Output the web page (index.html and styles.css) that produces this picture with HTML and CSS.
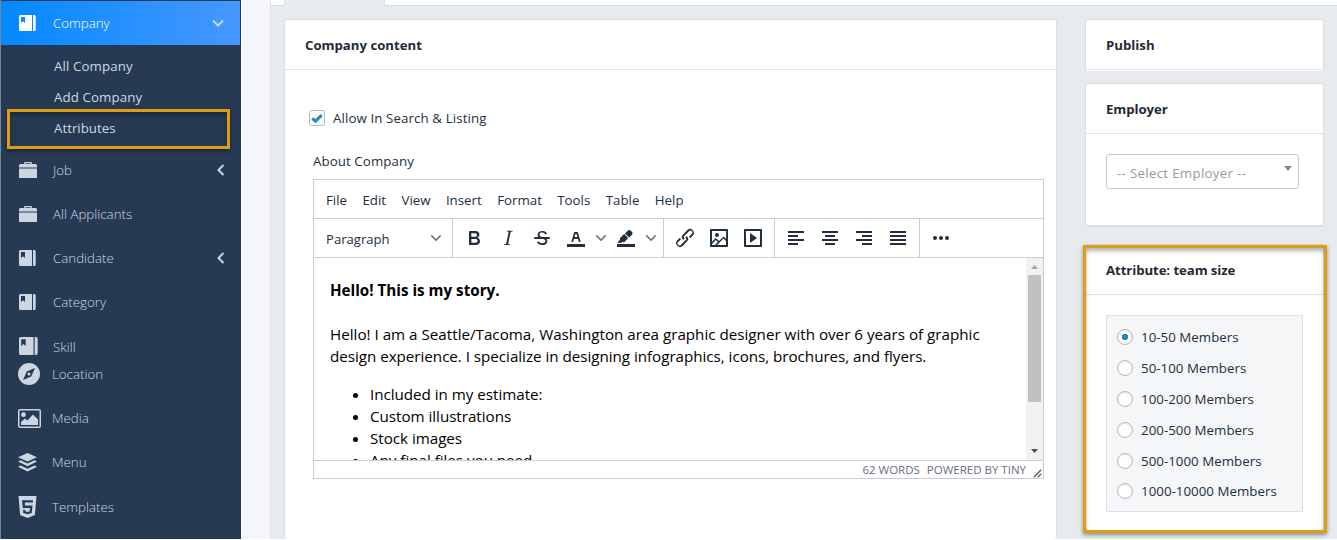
FILE: index.html
```html
<!DOCTYPE html>
<html lang="en">
<head>
<meta charset="utf-8">
<title>Company</title>
<link rel="stylesheet" href="styles.css">
</head>
<body>
<svg class="defs" width="0" height="0">
  <symbol id="book" viewBox="0 0 17 16"><path fill-rule="evenodd" d="M1.500 0H13v16H1.500a1.500 1.500 0 0 1-1.500-1.500v-13A1.500 1.500 0 0 1 1.500 0zM2 2v6l2-1.800L6 8V2zM14 0h1.200a1.500 1.500 0 0 1 1.500 1.500v13a1.500 1.500 0 0 1-1.500 1.500H14z"/></symbol>
  <symbol id="case" viewBox="0 0 18 16"><path fill-rule="evenodd" d="M0 5.500V3.500a1.500 1.500 0 0 1 1.500-1.500H5V1.200A1.200 1.200 0 0 1 6.200 0h5.600A1.200 1.200 0 0 1 13 1.200V2h3.500A1.500 1.500 0 0 1 18 3.500v2zM6.300 2h5.400v-.8H6.300zM0 6.500h18V16H0z"/></symbol>
  <symbol id="chev" viewBox="0 0 10 10"><path d="M8.700 2.200c.3-.3.8-.3 1 0 .4.4.4.9 0 1.200L5.700 7.800c-.3.3-.9.3-1.200 0L.2 3.400a.8.8 0 0 1 0-1.200c.3-.3.8-.3 1.100 0L5 6l3.700-3.800z"/></symbol>
</svg>
<div class="app">
  <nav class="sidebar">
    <div class="item active"><svg class="ico book"><use href="#book"/></svg><span>Company</span><svg class="arrow down" viewBox="0 0 12 8"><path d="M1 1.500l5 5 5-5"/></svg></div>
    <div class="submenu">
      <div class="sub s-all">All Company</div>
      <div class="sub s-add">Add Company</div>
      <div class="sub s-att">Attributes</div>
      <div class="mark"></div>
    </div>
    <div class="item"><svg class="ico case"><use href="#case"/></svg><span>Job</span><svg class="arrow left" viewBox="0 0 8 12"><path d="M6.500 1l-5 5 5 5"/></svg></div>
    <div class="item"><svg class="ico case"><use href="#case"/></svg><span>All Applicants</span></div>
    <div class="item"><svg class="ico book"><use href="#book"/></svg><span>Candidate</span><svg class="arrow left" viewBox="0 0 8 12"><path d="M6.500 1l-5 5 5 5"/></svg></div>
    <div class="item"><svg class="ico book"><use href="#book"/></svg><span>Category</span></div>
    <div class="item skill"><svg class="ico book big"><use href="#book"/></svg><span>Skill</span></div>
    <div class="item low"><svg class="ico compass" viewBox="0 0 22 22"><path fill-rule="evenodd" d="M11 0a11 11 0 1 1 0 22 11 11 0 0 1 0-22zM17 5L8.800 8.600 5 17l8.200-3.600zM11 9.500a1.500 1.500 0 1 1 0 3 1.500 1.500 0 0 1 0-3z"/></svg><span>Location</span></div>
    <div class="item low"><svg class="ico photo" viewBox="0 0 23 19"><path fill-rule="evenodd" d="M2 0h19a2 2 0 0 1 2 2v15a2 2 0 0 1-2 2H2a2 2 0 0 1-2-2V2a2 2 0 0 1 2-2zM1.500 1.500v16h20v-16zM5.500 3.300a2.400 2.400 0 1 1 0 4.800 2.400 2.400 0 0 1 0-4.800zM3 16v-3l4-3.500 2.500 2L15 5.500l5 5V16z"/></svg><span>Media</span></div>
    <div class="item low"><svg class="ico layers" viewBox="0 0 19 19"><path d="M9.500 0L19 4.300 9.500 8.600 0 4.300z"/><path d="M0 8.500l2.500-1.200 7 3.200 7-3.200L19 8.500l-9.500 4.700z"/><path d="M0 13.800l2.500-1.200 7 3.200 7-3.200 2.500 1.200L9.500 18.500z"/></svg><span>Menu</span></div>
    <div class="item low last"><svg class="ico html5" viewBox="0 0 18 22"><path fill-rule="evenodd" d="M0 0h18l-1.600 19L9 22l-7.400-3zM3.500 4.200l.8 7.800h7.200l-.3 3.200-2.200.7-2.200-.7-.1-1.500H4.500l.3 3.400L9 18.300l4.200-1.200.8-7.500H6.500l-.2-3h8l.2-2.400z"/></svg><span>Templates</span></div>
  </nav>
  <div class="gutter"></div>
  <div class="page">
    <div class="tabs"><i class="tab-start"></i><i class="tab-open"></i><i class="tab-rest"></i></div>
    <div class="columns">
      <section class="card main">
        <h2 class="head"><span class="t-cc">Company content</span></h2>
        <div class="body">
          <label class="check"><svg viewBox="0 0 16 16"><rect x=".5" y=".5" width="15" height="15" rx="2"/><path d="M3.300 8.300l3.200 2.800 6.200-6"/></svg><span>Allow In Search &amp; Listing</span></label>
          <div class="label">About Company</div>
          <div class="editor">
            <div class="menubar"><span>File</span><span>Edit</span><span>View</span><span>Insert</span><span>Format</span><span>Tools</span><span>Table</span><span>Help</span></div>
            <div class="toolbar">
              <div class="group para"><span>Paragraph</span><svg class="chev"><use href="#chev"/></svg></div>
              <div class="group text">
                <svg class="btn" viewBox="0 0 24 24"><path fill-rule="evenodd" d="M7.800 19c-.3 0-.5 0-.6-.2l-.2-.5V5.700c0-.2 0-.4.2-.5l.6-.2h5c1.500 0 2.700.3 3.500 1 .7.6 1.100 1.400 1.100 2.500a3 3 0 0 1-.6 1.900c-.4.6-1 1-1.600 1.200.4.1.9.3 1.300.6s.8.7 1 1.200c.4.4.5 1 .5 1.600 0 1.300-.4 2.300-1.300 3-.8.7-2.100 1-3.800 1H7.800zm5-8.300c.6 0 1.200-.1 1.600-.5.4-.3.6-.7.6-1.300 0-1.100-.8-1.700-2.300-1.700H9.300v3.500h3.400zm.5 6c.7 0 1.300-.1 1.700-.4.4-.4.6-.9.6-1.500s-.2-1-.7-1.400c-.4-.3-1-.4-2-.4H9.400v3.800h4z"/></svg>
                <svg class="btn" viewBox="0 0 24 24"><path d="M16.700 4.700l-.1.900h-.3c-.6 0-1 0-1.400.3-.3.300-.4.600-.5 1.100l-2.100 9.800v.6c0 .5.4.8 1.400.8h.2l-.2.800H8l.2-.8h.2c1.100 0 1.800-.5 2-1.500l2-9.800.1-.5c0-.6-.4-.8-1.400-.8h-.3l.2-.9h5.800z"/></svg>
                <svg class="btn" viewBox="0 0 24 24"><path d="M15.600 8.500c-.5-.7-1-1.100-1.300-1.300-.6-.4-1.300-.6-2-.6-2.700 0-2.800 1.700-2.800 2.100 0 1.600 1.800 2 3.200 2.300 4.400.9 4.600 2.800 4.600 3.900 0 1.400-.7 4.100-5 4.100A6.200 6.200 0 0 1 7 16.400l1.500-1.100c.4.6 1.600 2 3.700 2 1.600 0 2.500-.4 3-1.200.4-.8.3-2-.8-2.600-.7-.4-1.600-.7-2.900-1-1-.2-3.900-.8-3.900-3.600C7.600 6 10.300 5 12.400 5c2.900 0 4.200 1.600 4.700 2.400l-1.500 1.100z"/><path d="M5 11h14a1 1 0 0 1 0 2H5a1 1 0 0 1 0-2z"/></svg>
                <svg class="btn" viewBox="0 0 24 24"><path d="M3 18h18v3H3z"/><path fill-rule="evenodd" d="M8.700 16h-.8a.5.5 0 0 1-.5-.6l2.700-9c.1-.3.3-.4.5-.4h2.800c.2 0 .4.1.5.4l2.700 9a.5.5 0 0 1-.5.6h-.8a.5.5 0 0 1-.4-.4l-.7-2.200c0-.3-.3-.4-.5-.4h-3.400c-.2 0-.4.1-.5.4l-.7 2.200c0 .3-.2.4-.4.4zm2.600-7.600l-.6 2a.5.5 0 0 0 .5.6h1.600a.5.5 0 0 0 .5-.6l-.6-2c0-.3-.3-.4-.5-.4h-.4c-.2 0-.4.1-.5.4z"/></svg>
                <svg class="chev split"><use href="#chev"/></svg>
                <svg class="btn" viewBox="0 0 24 24"><path d="M3 18h18v3H3z"/><path d="M7.700 16.700H3l3.300-3.300-.7-.8L10.200 8l4 4.100-4 4.200c-.2.2-.6.2-.8 0l-.6-.7-1.100 1.100zm5-7.500L11 7.400l3-2.900a2 2 0 0 1 2.600 0L18 6c.7.7.7 2 0 2.700l-2.900 2.900-1.800-1.800-.5-.6"/></svg>
                <svg class="chev split"><use href="#chev"/></svg>
              </div>
              <div class="group media">
                <svg class="btn" viewBox="0 0 24 24"><path d="M6.200 12.300a1 1 0 0 1 1.400 1.400l-2.100 2a2 2 0 1 0 2.700 2.800l4.800-4.800a1 1 0 0 0 0-1.400 1 1 0 1 1 1.400-1.300 2.900 2.900 0 0 1 0 4L9.600 20a3.900 3.900 0 0 1-5.500-5.500l2-2zm11.600-.6a1 1 0 0 1-1.400-1.400l2-2a2 2 0 1 0-2.600-2.800L11 10.300a1 1 0 0 0 0 1.400A1 1 0 1 1 9.600 13a2.900 2.900 0 0 1 0-4L14.400 4a3.900 3.900 0 0 1 5.500 5.500l-2 2z"/></svg>
                <svg class="btn" viewBox="0 0 24 24"><path fill-rule="evenodd" d="M5 15.700l3.300-3.200c.3-.3.700-.3 1 0L12 15l4.100-4c.3-.4.8-.4 1 0l2 1.900V5H5v10.700zM5 18V19h3l2.800-2.900-2-2L5 17.900zm14-3l-2.500-2.400-6.400 6.500H19v-4zM4 3h16c.6 0 1 .4 1 1v16c0 .6-.4 1-1 1H4a1 1 0 0 1-1-1V4c0-.6.4-1 1-1zm6 8a2 2 0 1 0 0-4 2 2 0 0 0 0 4z"/></svg>
                <svg class="btn" viewBox="0 0 24 24"><path fill-rule="evenodd" d="M4 3h16c.6 0 1 .4 1 1v16c0 .6-.4 1-1 1H4a1 1 0 0 1-1-1V4c0-.6.4-1 1-1zm1 2v14h14V5H5zm4.800 2.600l5.600 4a.5.5 0 0 1 0 .8l-5.600 4A.5.5 0 0 1 9 16V8a.5.5 0 0 1 .8-.4z"/></svg>
              </div>
              <div class="group align">
                <svg class="btn" viewBox="0 0 24 24"><path d="M4 5h16v2H4zM4 9h10v2H4zM4 13h16v2H4zM4 17h10v2H4z"/></svg>
                <svg class="btn" viewBox="0 0 24 24"><path d="M4 5h16v2H4zM7 9h10v2H7zM4 13h16v2H4zM7 17h10v2H7z"/></svg>
                <svg class="btn" viewBox="0 0 24 24"><path d="M4 5h16v2H4zM10 9h10v2H10zM4 13h16v2H4zM10 17h10v2H10z"/></svg>
                <svg class="btn" viewBox="0 0 24 24"><path d="M4 5h16v2H4zM4 9h16v2H4zM4 13h16v2H4zM4 17h16v2H4z"/></svg>
              </div>
              <div class="group more">
                <svg class="btn" viewBox="0 0 24 24"><circle cx="6" cy="12" r="2"/><circle cx="12" cy="12" r="2"/><circle cx="18" cy="12" r="2"/></svg>
              </div>
            </div>
            <div class="content">
              <div class="doc">
                <p class="title"><b>Hello! This is my story.</b></p>
                <p><span class="l1">Hello! I am a Seattle/Tacoma, Washington area graphic designer with over 6 years of graphic</span><br><span class="l2">design experience. I specialize in designing infographics, icons, brochures, and flyers.</span></p>
                <ul><li>Included in my estimate:</li><li>Custom illustrations</li><li>Stock images</li><li>Any final files you need</li></ul>
              </div>
              <div class="scroll"><svg viewBox="0 0 7 4"><path d="M0 4l3.500-4L7 4z" fill="#a3a3a3"/></svg><i></i><svg viewBox="0 0 7 4"><path d="M0 0h7L3.500 4z" fill="#505050"/></svg></div>
            </div>
            <div class="status"><span class="words">62 WORDS</span><span class="tiny">POWERED BY TINY</span><svg viewBox="0 0 9 9"><path d="M.8 8.200l7.400-7.400M4.800 8.200l3.400-3.400"/></svg></div>
          </div>
        </div>
      </section>
      <aside class="side">
        <section class="card publish"><h2 class="head"><span class="t-pub">Publish</span></h2></section>
        <section class="card employer"><h2 class="head"><span class="t-emp">Employer</span></h2><div class="select"><span>-- Select Employer --</span><i></i></div></section>
        <section class="card attribute"><h2 class="head"><span class="t-atr">Attribute: team size</span></h2>
          <div class="options">
            <label><i class="on"></i><span>10-50 Members</span></label>
            <label><i></i><span>50-100 Members</span></label>
            <label><i></i><span>100-200 Members</span></label>
            <label><i></i><span>200-500 Members</span></label>
            <label><i></i><span>500-1000 Members</span></label>
            <label><i></i><span>1000-10000 Members</span></label>
          </div>
          <div class="mark"></div>
        </section>
      </aside>
    </div>
  </div>
</div>
</body>
</html>
```
FILE: styles.css
```css
* { box-sizing: border-box; }
body { margin: 0; height: 540px; overflow: hidden; background: #fff; color: #222f3e; font: 13.3px/20px "Open Sans", "Noto Sans", sans-serif; }
.defs { position: absolute; }
h2, p, ul { margin: 0; }
svg { flex: none; display: block; }
.app { display: flex; height: 539px; overflow: hidden; }

/* Sidebar */
.sidebar { width: 241px; flex: none; padding-top: 1px; background: #263a53; border-left: 1px solid #7a8694; color: #cdd8e4; overflow: hidden; }
.item { display: flex; align-items: center; height: 44px; padding: 0 16px 0 18px; font-weight: 300; }
.item span { flex: 1; white-space: nowrap; }
.item.active { width: 239px; color: #fff; background: linear-gradient(90deg, #0389ff, #4797ff); }
.ico { fill: #cbd6e2; margin-right: 17px; }
.active .ico { fill: #fff; }
.ico.book { width: 17px; height: 16px; }
.ico.case { width: 18px; height: 16px; margin-right: 16px; }
.ico.book.big { width: 19px; height: 18px; margin-right: 15px; }
.arrow { fill: none; stroke: #cbd6e2; stroke-width: 2; }
.arrow.down { width: 12px; height: 8px; }
.arrow.left { width: 8px; height: 12px; }
.submenu { position: relative; height: 103px; padding-top: 6px; }
.sub { height: 31px; line-height: 31px; padding-left: 53px; }
.s-all, .s-add { letter-spacing: .1px; }
.mark { position: absolute; border: 3px solid #dd9e12; box-shadow: 0 2px 4px rgba(0,0,0,.4), inset 0 3px 4px rgba(0,0,0,.3); pointer-events: none; }
.submenu .mark { left: 6px; top: 64px; width: 223px; height: 40px; }
.item.skill { height: 28px; align-items: flex-start; padding-top: 13px; }
.item.low { padding-left: 17px; }
.item.last { padding-top: 1px; }
.ico.compass { width: 22px; height: 22px; margin-right: 12px; }
.ico.photo { width: 23px; height: 19px; margin-right: 11px; }
.ico.layers { width: 19px; height: 19px; margin-right: 15px; }
.ico.html5 { width: 19px; height: 22px; margin-right: 15px; }

.gutter { width: 29px; flex: none; background: #f5f6f9; }
.page { flex: 1; min-width: 0; background: #e7ebee; border-left: 1px solid #dee1e5; }
.tabs { display: flex; height: 6px; }
.tab-start, .tab-rest { background: #fff; border-bottom: 1px solid #dadde0; }
.tab-start { width: 14px; border-right: 1px solid #dadde0; }
.tab-open { width: 99px; }
.tab-rest { flex: 1; border-left: 1px solid #dadde0; }
.columns { display: flex; gap: 28px; padding: 13px 13px 0 13px; }

/* Cards */
.card { background: #fff; border: 1px solid #dadee2; border-radius: 3px; box-shadow: 0 1px 1px rgba(0,0,0,.05); }
.head { height: 50px; padding-left: 20px; border-bottom: 1px solid #dfe1e5; font-size: 13.200px; line-height: 50px; font-weight: 700; color: #1f2a36; }
.main { width: 773px; height: 520px; border-bottom: 0; flex: none; }
.body { padding: 38px 12px 0 24px; }
.side { width: 239px; }
.check { display: flex; align-items: center; height: 20px; gap: 8px; letter-spacing: .1px; }
.check svg { width: 16px; height: 16px; fill: #fcfcfc; stroke: #b4b9be; }
.check path { fill: none; stroke: #1e8cbe; stroke-width: 3; }
.label { margin: 23px 0 8px 4px; letter-spacing: .08px; }

/* Editor */
.editor { margin-left: 4px; width: 731px; height: 300px; border: 1px solid #ccc; }
.menubar { display: flex; height: 39px; align-items: center; gap: 15.400px; padding: 2px 0 0 12px; border-bottom: 1px solid #ccc; }
.toolbar { display: flex; height: 39px; border-bottom: 1px solid #ccc; fill: #222f3e; }
.group { display: flex; align-items: center; border-right: 1px solid #ccc; }
.btn { width: 24px; height: 24px; margin: 0 5px; }
.chev { width: 10px; height: 10px; fill: #6d7683; }
.chev.split { margin: 0 3px 0 3px; }
.para { width: 139px; justify-content: space-between; padding: 0 11px 0 12px; }
.para span { padding-top: 1px; font-size: 13.100px; }
.text { width: 211px; padding-left: 4px; }
.media { width: 111px; padding-left: 4px; }
.align { width: 145px; padding-left: 4px; }
.more { border-right: 0; padding-left: 4px; }
.content { display: flex; height: 202px; overflow: hidden; color: #000; font-size: 15.2px; line-height: 22px; }
.doc { flex: 1; padding: 21px 0 0 16px; white-space: nowrap; }
.doc p { margin-bottom: 16px; }
.doc .title { margin-bottom: 22px; }
.l2, .doc li { letter-spacing: -.03px; }
.doc ul { padding-left: 40px; }
.scroll { width: 17px; background: #f1f1f1; display: flex; flex-direction: column; align-items: center; padding: 7px 0; }
.scroll svg { width: 7px; height: 4px; }
.scroll i { width: 13px; height: 127px; background: #c1c1c1; margin: 6px 0 auto; }
.status { display: flex; height: 19px; align-items: center; justify-content: flex-end; border-top: 1px solid #ccc; font-size: 11.500px; color: #657080; gap: 7px; padding-right: 1px; }
.status svg { width: 9px; height: 9px; stroke: #596675; stroke-width: 1.500; align-self: flex-end; margin-bottom: 1px; }

/* Side column */
.publish { height: 52px; border-bottom: 0; border-radius: 3px 3px 0 0; margin-bottom: 12px; box-shadow: none; }
.employer { height: 143px; margin-bottom: 18px; }
.t-emp { letter-spacing: -.05px; }
.t-atr { letter-spacing: -.08px; }
.select { display: flex; align-items: center; justify-content: space-between; width: 193px; height: 35px; margin: 20px 0 0 20px; border: 1px solid #c2cad8; border-radius: 3px; padding: 2px 6px 0 10px; color: #999; }
.select span { letter-spacing: .3px; }
.select i { border: 4px solid transparent; border-top: 5px solid #888; border-bottom: 0; margin-bottom: 8px; }
.attribute { position: relative; height: 286px; border-bottom: 0; }
.options { width: 197px; height: 197px; margin: 20px 0 0 20px; padding: 5px 0 0 10px; background: #f4f6f8; border: 1px solid #dcdfe5; }
.options label { display: flex; align-items: center; gap: 8px; height: 31px; letter-spacing: .03px; }
.options label:last-child { height: 30px; }
.options i { width: 16px; height: 16px; border: 1px solid #b4b9be; border-radius: 50%; background: #fff; box-shadow: inset 0 1px 2px rgba(0,0,0,.1); }
.options .on { background: radial-gradient(circle, #1e8cbe 0 3px, #fff 3.500px); }
.attribute .mark { left: -3px; top: 0; width: 244px; height: 288px; }
```
